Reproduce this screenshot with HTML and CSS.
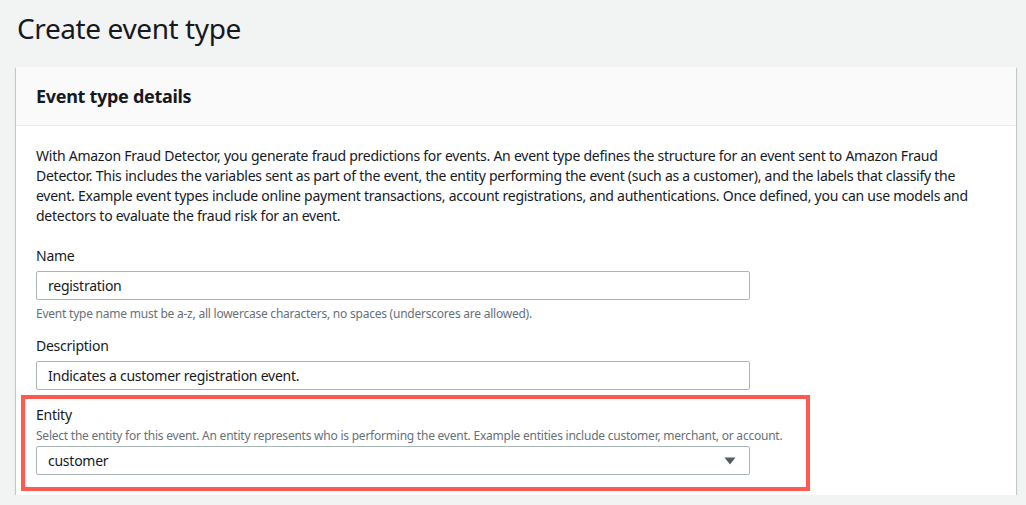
FILE: index.html
```html
<!DOCTYPE html>
<html lang="en">
<head>
<meta charset="utf-8">
<title>Create event type</title>
<link rel="stylesheet" href="styles.css">
</head>
<body>
<main class="page">
  <h1 class="page-title">Create event type</h1>
  <section class="card">
    <header class="card-header">
      <h2 class="card-title">Event type details</h2>
    </header>
    <div class="card-body">
      <p class="intro">With Amazon Fraud Detector, you generate fraud predictions for events. An event type defines the structure for an event sent to Amazon Fraud Detector. This includes the variables sent as part of the event, the entity performing the event (such as a customer), and the labels that classify the event. Example event types include online payment transactions, account registrations, and authentications. Once defined, you can use models and detectors to evaluate the fraud risk for an event.</p>

      <div class="field field-name">
        <label class="field-label" for="name">Name</label>
        <input class="text-input" id="name" type="text" value="registration">
        <div class="field-hint">Event type name must be a-z, all lowercase characters, no spaces (underscores are allowed).</div>
      </div>

      <div class="field field-desc">
        <label class="field-label" for="desc">Description</label>
        <input class="text-input" id="desc" type="text" value="Indicates a customer registration event.">
      </div>

      <div class="field field-entity highlight">
        <div class="field-label">Entity</div>
        <div class="field-hint hint-top">Select the entity for this event. An entity represents who is performing the event. Example entities include customer, merchant, or account.</div>
        <div class="select">
          <span class="select-value">customer</span>
          <svg class="select-caret" width="12" height="8" viewBox="0 0 12 8" aria-hidden="true"><path d="M0.5 0.5 H11.5 L6 7.5 Z" fill="#545b64"/></svg>
        </div>
      </div>
    </div>
  </section>
</main>
</body>
</html>
```

FILE: styles.css
```css
* { box-sizing: border-box; }

html, body {
  margin: 0;
  padding: 0;
  background: #f2f3f3;
}

body {
  font-family: "Noto Sans", "Liberation Sans", sans-serif;
  color: #16191f;
  font-size: 14px;
  line-height: 20px;
  letter-spacing: -0.25px;
}

.page {
  padding: 10px 10px 0 16px;
}

.page-title {
  margin: 0 0 21px 1px;
  font-size: 28px;
  line-height: 36px;
  font-weight: 400;
  letter-spacing: -0.4px;
  color: #16191f;
}

.card {
  width: 1000px;
  background: #ffffff;
  box-shadow: 0 1px 1px 0 rgba(0, 28, 36, 0.3), 1px 1px 1px 0 rgba(0, 28, 36, 0.15), -1px 1px 1px 0 rgba(0, 28, 36, 0.15);
}

.card-header {
  background: #fafafa;
  border-bottom: 1px solid #eaeded;
  height: 59px;
  padding: 0 20px;
  display: flex;
  align-items: center;
}

.card-title {
  margin: 0;
  font-size: 18px;
  line-height: 22px;
  font-weight: 700;
  letter-spacing: -0.3px;
  color: #16191f;
}

.card-body {
  padding: 20px 20px 4px 20px;
}

.intro {
  margin: 0 0 20px 0;
}

.field {
  display: flex;
  flex-direction: column;
  align-items: flex-start;
}

.field-label {
  display: block;
  font-size: 14px;
  line-height: 20px;
  margin-bottom: 5px;
}

.text-input {
  width: 714px;
  height: 29px;
  border: 1px solid #aab7b8;
  border-radius: 2px;
  padding: 0 11px;
  font: inherit;
  font-size: 14px;
  letter-spacing: -0.25px;
  color: #16191f;
  background: #fff;
  outline: none;
}

.field-hint {
  font-size: 12px;
  line-height: 16px;
  letter-spacing: -0.23px;
  color: #687078;
  margin-top: 6px;
}

.field-desc {
  margin-top: 14px;
}

.highlight {
  width: 789px;
  margin: 5px 0 0 -15px;
  padding: 6px 0 12px 11px;
  border: 4px solid #ff5a4f;
}

.highlight .field-label {
  margin-bottom: 0;
}

.hint-top {
  margin-top: 3px;
  margin-bottom: 2px;
  white-space: nowrap;
}

.select {
  width: 714px;
  height: 29px;
  border: 1px solid #aab7b8;
  border-radius: 2px;
  padding: 0 13px 0 11px;
  display: flex;
  align-items: center;
  justify-content: space-between;
  background: #fff;
}

.select-value {
  font-size: 14px;
}

.select-caret {
  display: block;
}
```
